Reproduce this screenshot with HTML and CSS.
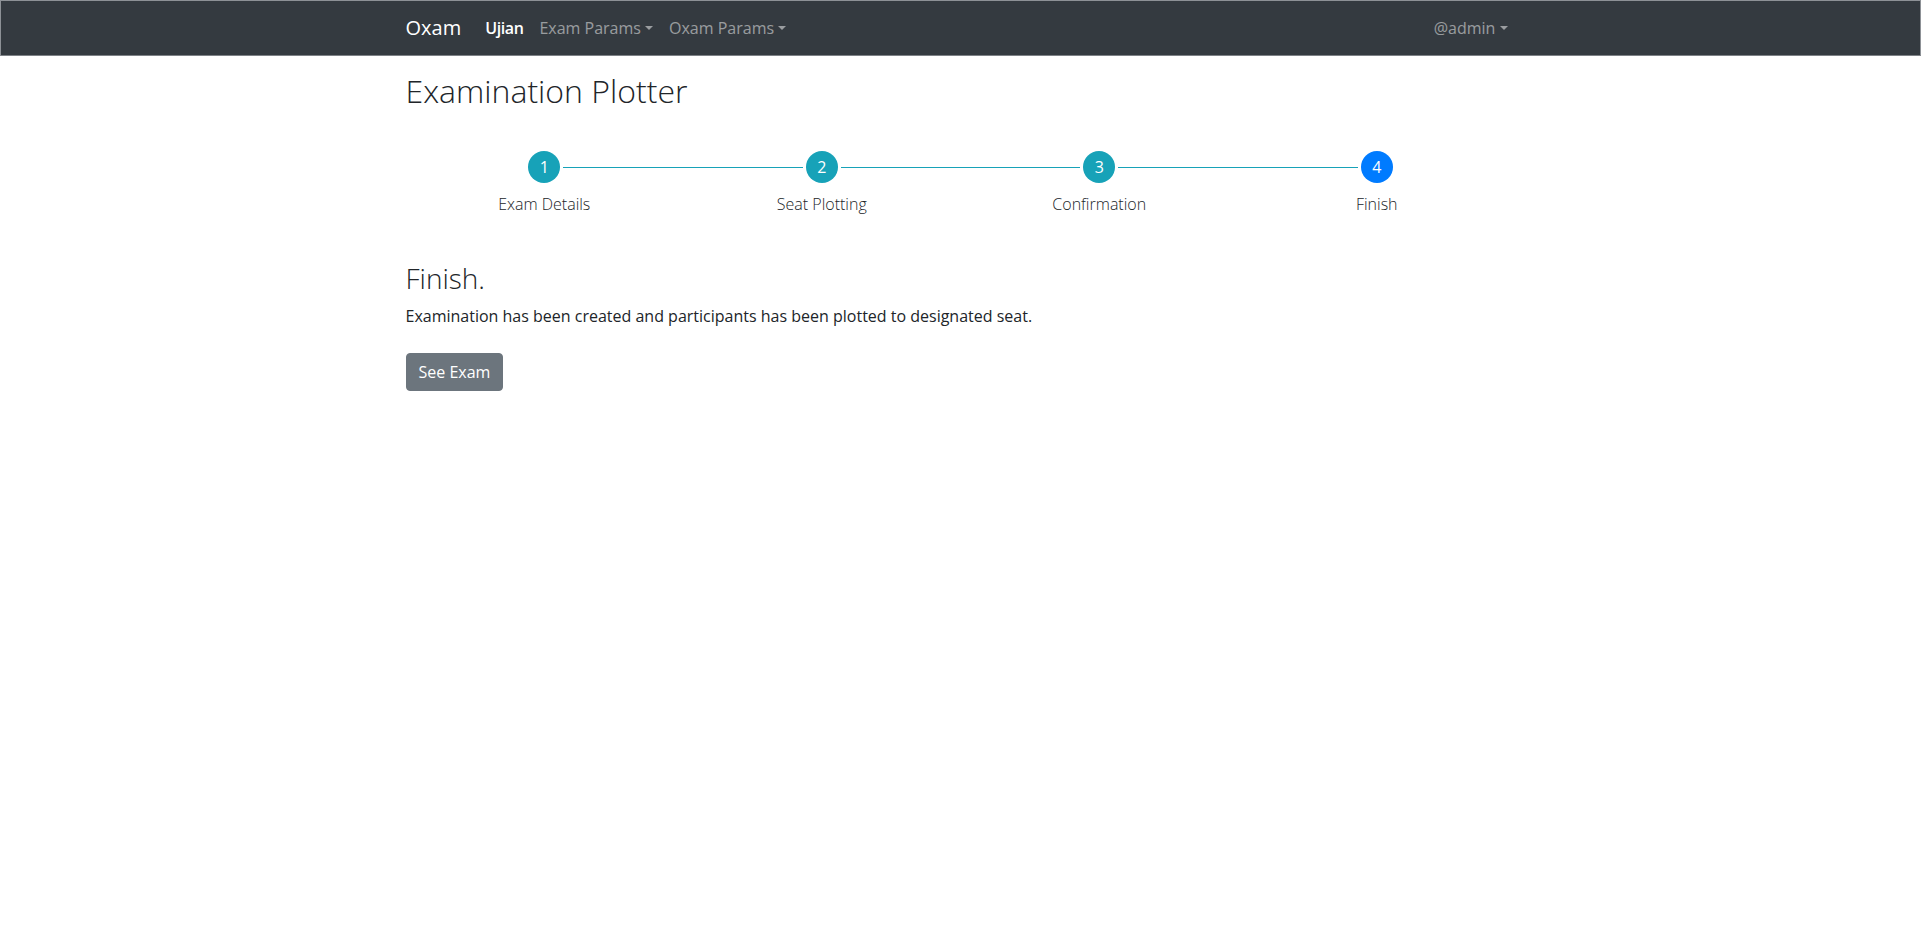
FILE: index.html
```html
<!DOCTYPE html>
<html lang="en">
<head>
<meta charset="utf-8">
<title>Examination Plotter</title>
<link rel="stylesheet" href="styles.css">
</head>
<body>
<nav class="navbar">
  <div class="nav-container">
    <a class="brand" href="#">Oxam</a>
    <ul class="nav-list">
      <li><a class="nav-link active" href="#">Ujian</a></li>
      <li><a class="nav-link dropdown" href="#">Exam Params</a></li>
      <li><a class="nav-link dropdown" href="#">Oxam Params</a></li>
    </ul>
    <ul class="nav-list nav-right">
      <li><a class="nav-link dropdown" href="#">@admin</a></li>
    </ul>
  </div>
</nav>
<main class="container">
  <h1 class="page-title">Examination Plotter</h1>
  <div class="stepper">
    <div class="step first">
      <div class="step-row"><span class="line"></span><span class="circle">1</span><span class="line"></span></div>
      <div class="step-label">Exam Details</div>
    </div>
    <div class="step">
      <div class="step-row"><span class="line"></span><span class="circle">2</span><span class="line"></span></div>
      <div class="step-label">Seat Plotting</div>
    </div>
    <div class="step">
      <div class="step-row"><span class="line"></span><span class="circle">3</span><span class="line"></span></div>
      <div class="step-label">Confirmation</div>
    </div>
    <div class="step last">
      <div class="step-row"><span class="line"></span><span class="circle current">4</span><span class="line"></span></div>
      <div class="step-label">Finish</div>
    </div>
  </div>
  <h3 class="section-title">Finish.</h3>
  <p class="lead-text">Examination has been created and participants has been plotted to designated seat.</p>
  <a class="btn-secondary" href="#">See Exam</a>
</main>
</body>
</html>
```

FILE: styles.css
```css
* { box-sizing: border-box; }

html, body {
  margin: 0;
  padding: 0;
  background: #fff;
}

body {
  font-family: "Open Sans", "Liberation Sans", sans-serif;
  font-size: 16px;
  line-height: 1.5;
  color: #212529;
}

a { text-decoration: none; }

.navbar {
  background: #343a40;
  height: 56px;
  padding: 7px 16px;
  border: 1px solid #8d9196;
  border-bottom-color: #7d8186;
}

.nav-container {
  width: 1140px;
  margin: 0 auto;
  padding: 0 15px;
  display: flex;
  align-items: center;
  height: 40px;
}

.brand {
  font-size: 20px;
  line-height: 30px;
  color: #fff;
  margin-right: 16px;
  padding: 5px 0;
}

.nav-list {
  list-style: none;
  margin: 0;
  padding: 0;
  display: flex;
}

.nav-right { margin-left: auto; }

.nav-link {
  display: block;
  padding: 8px;
  color: rgba(255, 255, 255, 0.5);
  line-height: 24px;
}

.nav-link.active {
  color: #fff;
  font-weight: 600;
  letter-spacing: -0.4px;
}

.dropdown::after {
  content: "";
  display: inline-block;
  margin-left: 0.255em;
  vertical-align: 0.255em;
  border-top: 0.3em solid;
  border-right: 0.3em solid transparent;
  border-left: 0.3em solid transparent;
  border-bottom: 0;
}

.container {
  width: 1140px;
  margin: 0 auto;
  padding: 0 15px;
}

.page-title {
  font-size: 32px;
  font-weight: 300;
  line-height: 1.2;
  margin: 16px 0 8px;
}

.stepper {
  display: grid;
  grid-template-columns: repeat(4, 1fr);
  margin: 41px 0 46px;
}

.step {
  display: flex;
  flex-direction: column;
  align-items: stretch;
}

.step-row {
  display: flex;
  align-items: center;
  height: 32px;
}

.line {
  flex: 1;
  height: 1px;
  background: #17a2b8;
}

.step-row .line:first-child { margin-right: 3px; }
.step-row .line:last-child { margin-left: 3px; }

.first .line:first-child,
.last .line:last-child { background: transparent; }

.circle {
  width: 32px;
  height: 32px;
  border-radius: 50%;
  background: #17a2b8;
  color: #fff;
  display: flex;
  align-items: center;
  justify-content: center;
  font-size: 16px;
  line-height: 1;
}

.circle.current { background: #007bff; }

.step-label {
  margin-top: 9px;
  text-align: center;
  font-weight: 300;
  font-size: 16px;
  line-height: 24px;
}

.section-title {
  font-size: 28px;
  font-weight: 300;
  line-height: 1.2;
  margin: 0 0 8px;
}

.lead-text {
  margin: 0 0 25px;
}

.btn-secondary {
  display: inline-block;
  background: #6c757d;
  color: #fff;
  border: 1px solid #6c757d;
  border-radius: 4px;
  padding: 6px 12px;
  font-size: 16px;
  line-height: 24px;
}
```
